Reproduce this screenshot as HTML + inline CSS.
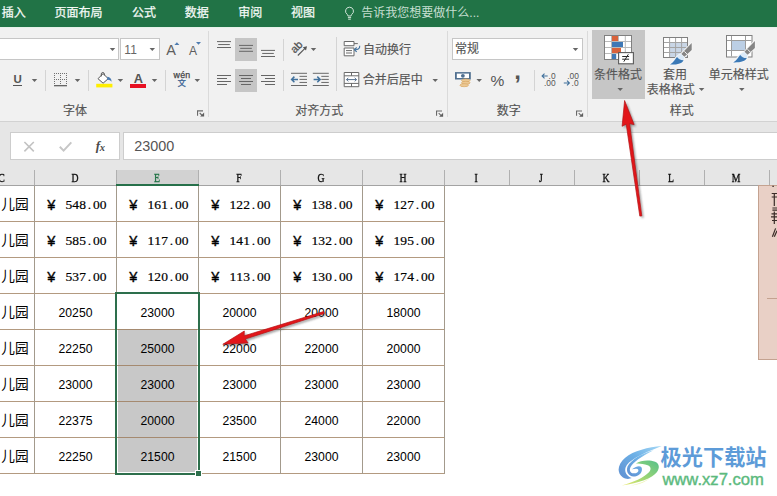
<!DOCTYPE html>
<html lang="zh-CN"><head><meta charset="utf-8"><title>Excel</title>
<style>
html,body{margin:0;padding:0;background:#fff;}
body{width:777px;height:496px;overflow:hidden;position:relative;font-family:"Liberation Sans",sans-serif;}
#root{position:absolute;left:0;top:0;width:777px;height:496px;overflow:hidden;background:#fff;}
.a{position:absolute;}
.t{position:absolute;overflow:visible;}
.x{position:absolute;white-space:pre;line-height:1;}
.sf{font-family:"Liberation Serif",serif;}
.mf{font-family:"Liberation Mono",monospace;}
.cj{font-family:"Liberation Sans","Noto Sans CJK SC",sans-serif;}
svg{display:block;}
</style></head><body><div id="root">
<div class="a" style="left:0px;top:0px;width:777px;height:27px;background:#217346;"></div>
<span class="x cj" style="left:1.8px;top:6.5px;font-size:12px;color:#f4faf6;-webkit-text-stroke:.25px;">插入</span>
<span class="x cj" style="left:54.6px;top:6.5px;font-size:12px;color:#f4faf6;-webkit-text-stroke:.25px;">页面布局</span>
<span class="x cj" style="left:132.1px;top:6.5px;font-size:12px;color:#f4faf6;-webkit-text-stroke:.25px;">公式</span>
<span class="x cj" style="left:184.8px;top:6.5px;font-size:12px;color:#f4faf6;-webkit-text-stroke:.25px;">数据</span>
<span class="x cj" style="left:238.2px;top:6.5px;font-size:12px;color:#f4faf6;-webkit-text-stroke:.25px;">审阅</span>
<span class="x cj" style="left:291px;top:6.5px;font-size:12px;color:#f4faf6;-webkit-text-stroke:.25px;">视图</span>
<span class="x cj" style="left:361.2px;top:6.5px;font-size:12px;color:#c6dfd1;">告诉我您想要做什么</span>
<span class="x " style="left:469.3px;top:7.2px;font-size:12px;color:#c6dfd1;">...</span>
<svg class="t" style="left:344px;top:6px;" width="11" height="15" viewBox="0 0 11 15"><path d="M5.5 1.2a3.9 3.9 0 0 0-2.3 7.1c.5.5.7 1 .7 1.7h3.2c0-.7.2-1.2.7-1.7A3.9 3.9 0 0 0 5.5 1.2z" fill="none" stroke="#cfe3d7" stroke-width="1"/><path d="M3.9 11.6h3.2M4.2 13.2h2.6" stroke="#cfe3d7" stroke-width="1"/></svg>
<div class="a" style="left:0px;top:27px;width:777px;height:94px;background:#f1f1f1;"></div>
<div class="a" style="left:0px;top:121px;width:777px;height:1px;background:#d2d2d2;"></div>
<div class="a" style="left:0px;top:27px;width:777px;height:1.2px;background:#e6f2ea;"></div>
<div class="a" style="left:0px;top:122px;width:777px;height:48px;background:#e6e6e6;"></div>
<div class="a" style="left:-2px;top:38px;width:121px;height:22px;background:#fff;border:1px solid #c6c6c6;box-sizing:border-box;"></div>
<svg class="t" style="left:109px;top:48px;" width="7" height="3" viewBox="-0.75 0 7 3"><path d="M0 0h5.5 l-2.75 3 z" fill="#666"/></svg>
<div class="a" style="left:120px;top:38px;width:40px;height:22px;background:#fff;border:1px solid #c6c6c6;box-sizing:border-box;"></div>
<span class="x " style="left:124.2px;top:43.8px;font-size:12px;color:#666;letter-spacing:.4px;">11</span>
<svg class="t" style="left:149px;top:48px;" width="7" height="3" viewBox="-0.55 0 7 3"><path d="M0 0h5.5 l-2.75 3 z" fill="#666"/></svg>
<span class="x " style="left:166.2px;top:42.6px;font-size:14.5px;color:#5e5e5e;">A</span>
<svg class="t" style="left:174px;top:42px;" width="6" height="3" viewBox="-0.4 -0.2 6 3"><path d="M0 2.800h5L2.500 0z" fill="#4f7cb0"/></svg>
<span class="x " style="left:189px;top:45px;font-size:12px;color:#5e5e5e;">A</span>
<svg class="t" style="left:196px;top:42px;" width="5" height="3" viewBox="0 0 5 3"><path d="M0 0h5L2.500 2.800z" fill="#4f7cb0"/></svg>
<span class="x " style="left:13.6px;top:74.3px;font-size:11.5px;color:#555;font-weight:bold;">U</span>
<div class="a" style="left:13px;top:85px;width:9px;height:1px;background:#555;"></div>
<svg class="t" style="left:31px;top:79px;" width="7" height="3" viewBox="-0.75 0 7 3"><path d="M0 0h5.5 l-2.75 3 z" fill="#666"/></svg>
<div class="a" style="left:44.8px;top:69.5px;width:1px;height:21px;background:#d4d4d4;"></div>
<svg class="t" style="left:54px;top:73px;" width="13" height="14" viewBox="0 0 13 14"><path d="M0 .5h13M0 6.500h13M.5 0v12M6.500 0v12M12.500 0v12" stroke="#707070" stroke-width="1" stroke-dasharray="1 1" fill="none"/><path d="M0 12.700h13" stroke="#555" stroke-width="1.200"/></svg>
<svg class="t" style="left:74px;top:79px;" width="7" height="3" viewBox="-0.75 0 7 3"><path d="M0 0h5.5 l-2.75 3 z" fill="#666"/></svg>
<div class="a" style="left:88px;top:69.5px;width:1px;height:21px;background:#d4d4d4;"></div>
<svg class="t" style="left:96px;top:71px;" width="17" height="18" viewBox="0 0 17 18"><rect x=".2" y="12.800" width="16.200" height="3.600" fill="#ffee00"/><path d="M7.100 2.600L12.200 7.700 7.100 12.200 2 7.700z" fill="#fff" stroke="#555" stroke-width="1" stroke-linejoin="round"/><path d="M5.300 5.400V2.800c0-1.700 3-1.700 3 0v1.600" fill="none" stroke="#555" stroke-width="1"/><path d="M11.300 5.800c2.700.4 4.300 2.200 4.300 5-1.100-1.600-2.600-2.300-4.500-2z" fill="#4a7ab0"/></svg>
<svg class="t" style="left:117px;top:79px;" width="7" height="3" viewBox="-0.65 0 7 3"><path d="M0 0h5.5 l-2.75 3 z" fill="#666"/></svg>
<span class="x " style="left:133.8px;top:73px;font-size:12.8px;color:#555;font-weight:bold;">A</span>
<div class="a" style="left:130.4px;top:84px;width:15.8px;height:4px;background:#e81123;"></div>
<svg class="t" style="left:151px;top:79px;" width="7" height="3" viewBox="-0.75 0 7 3"><path d="M0 0h5.5 l-2.75 3 z" fill="#666"/></svg>
<div class="a" style="left:165px;top:69.5px;width:1px;height:21px;background:#d4d4d4;"></div>
<span class="x " style="left:173.6px;top:71.3px;font-size:8.8px;color:#444;letter-spacing:.25px;-webkit-text-stroke:.25px;">wén</span>
<span class="x cj" style="left:177.4px;top:79.3px;font-size:8.5px;color:#4a6e9a;font-weight:bold;">文</span>
<svg class="t" style="left:194px;top:79px;" width="7" height="3" viewBox="-0.55 0 7 3"><path d="M0 0h5.500 l-2.750 3 z" fill="#666"/></svg>
<span class="x cj" style="left:63px;top:104.5px;font-size:12px;color:#555;-webkit-text-stroke:.15px;">字体</span>
<svg class="t" style="left:197px;top:110px;" width="8" height="8" viewBox="0 -0.3 8 8"><path d="M.55 5.400V.55H6" fill="none" stroke="#6a6a6a" stroke-width="1.100"/><path d="M2.700 2.700l2.500 2.500" fill="none" stroke="#6a6a6a" stroke-width="1.100"/><path d="M7.100 2.300V6.300H3.100z" fill="#5e5e5e"/></svg>
<div class="a" style="left:208px;top:31px;width:1px;height:86px;background:#dadada;"></div>
<div class="a" style="left:235.3px;top:38px;width:21.7px;height:23px;background:#c6c6c6;"></div>
<div class="a" style="left:235.3px;top:69px;width:21.7px;height:23px;background:#c6c6c6;"></div>
<svg class="t" style="left:217px;top:41px;" width="14" height="9" viewBox="0 -0.1 14 9"><path d="M0 0.5h14M1.2 3.45h11.6M0 6.4h14" stroke="#666" stroke-width="1" fill="none"/></svg>
<svg class="t" style="left:239px;top:44px;" width="14" height="10" viewBox="0 -0.9 14 10"><path d="M0 0.5h14M1.2 3.45h11.6M0 6.4h14" stroke="#666" stroke-width="1" fill="none"/></svg>
<svg class="t" style="left:261px;top:49px;" width="14" height="11" viewBox="0 -0.9 14 11"><path d="M0 0.5h14M1.2 3.55h11.6M0 6.6h14" stroke="#666" stroke-width="1" fill="none"/></svg>
<svg class="t" style="left:217px;top:75px;" width="14" height="12" viewBox="0 0 14 12"><path d="M0 0.5h14M0 3.5h10M0 6.5h14M0 9.5h10" stroke="#666" stroke-width="1" fill="none"/></svg>
<svg class="t" style="left:239px;top:75px;" width="14" height="12" viewBox="0 0 14 12"><path d="M0 0.5h14M2 3.5h10M0 6.5h14M2 9.5h10" stroke="#666" stroke-width="1" fill="none"/></svg>
<svg class="t" style="left:261px;top:75px;" width="14" height="12" viewBox="0 0 14 12"><path d="M0 0.5h14M4 3.5h10M0 6.5h14M4 9.5h10" stroke="#666" stroke-width="1" fill="none"/></svg>
<div class="a" style="left:283.4px;top:38.5px;width:1px;height:22px;background:#d4d4d4;"></div>
<div class="a" style="left:283.4px;top:69.5px;width:1px;height:21px;background:#d4d4d4;"></div>
<svg class="t" style="left:288px;top:38px;" width="22" height="22" viewBox="0 0 22 22"><text transform="translate(6.800 15.800) rotate(-45)" font-family="Liberation Sans, sans-serif" font-size="10.8" fill="#555" stroke="#555" stroke-width=".3">ab</text><path d="M9.800 17.500L18 9.300" stroke="#555" stroke-width="1.100" fill="none"/><path d="M19 8.300l-4.200 1 3.200 3.200z" fill="#555"/></svg>
<svg class="t" style="left:310px;top:48px;" width="7" height="3" viewBox="-0.75 0 7 3"><path d="M0 0h5.5 l-2.75 3 z" fill="#666"/></svg>
<svg class="t" style="left:291px;top:72px;" width="16" height="14" viewBox="0 -0.8 16 14"><path d="M0 .5h16M8.500 3.550H16M8.500 6.600H16M8.500 9.650H16M0 12.700h16" stroke="#6a6a6a" stroke-width="1" fill="none"/><path d="M.8 6.600h6.200M3.400 3.800l-2.800 2.800 2.800 2.800" stroke="#41719c" stroke-width="1.500" fill="none"/></svg>
<svg class="t" style="left:312px;top:72px;" width="17" height="14" viewBox="-0.8 -0.8 17 14"><path d="M0 .5h16M8.500 3.550H16M8.500 6.600H16M8.500 9.650H16M0 12.700h16" stroke="#6a6a6a" stroke-width="1" fill="none"/><path d="M.8 6.600h6.200M4.500 3.800l2.800 2.800-2.800 2.800" stroke="#41719c" stroke-width="1.500" fill="none"/></svg>
<div class="a" style="left:336px;top:37px;width:1px;height:54px;background:#d4d4d4;"></div>
<svg class="t" style="left:343px;top:41px;" width="19" height="16" viewBox="-0.7 0 19 16"><path d="M.5 .5h9.800v4.200H.5zM.5 7h9.800v7.800H.5z" fill="#fff" stroke="#6a6a6a" stroke-width="1"/><path d="M2.300 9.600h6M2.300 12h6M10.300 2.600h3.800" stroke="#6a6a6a" stroke-width="1" fill="none"/><path d="M16 4.800c.3 2.600-1.500 3.900-4.800 3.900" fill="none" stroke="#41719c" stroke-width="1.100"/><path d="M13 6.500l-2.300 2.200 2.300 2.200" fill="none" stroke="#41719c" stroke-width="1.100"/></svg>
<span class="x cj" style="left:363.1px;top:43.5px;font-size:12px;color:#555;-webkit-text-stroke:.15px;">自动换行</span>
<svg class="t" style="left:343px;top:72px;" width="17" height="16" viewBox="-0.7 0 17 16"><path d="M.5 .5h14.600v14.200H.5zM.5 3.800h14.600M.5 11.400h14.600M7.800 .5v3.300M7.800 11.400v3.300" fill="#fff" stroke="#6a6a6a" stroke-width="1"/><path d="M2.800 7.600h10M4.600 5.800l-1.800 1.800 1.800 1.800M11 5.800l1.800 1.800-1.800 1.800" fill="none" stroke="#56708e" stroke-width="1"/></svg>
<span class="x cj" style="left:362.7px;top:74.2px;font-size:12px;color:#555;-webkit-text-stroke:.15px;">合并后居中</span>
<svg class="t" style="left:432px;top:79px;" width="6" height="3" viewBox="-0.45 0 6 3"><path d="M0 0h5.5 l-2.75 3 z" fill="#666"/></svg>
<span class="x cj" style="left:295.3px;top:104.5px;font-size:12px;color:#555;-webkit-text-stroke:.15px;">对齐方式</span>
<svg class="t" style="left:436px;top:110px;" width="8" height="8" viewBox="0 -0.4 8 8"><path d="M.55 5.400V.55H6" fill="none" stroke="#6a6a6a" stroke-width="1.100"/><path d="M2.700 2.700l2.500 2.500" fill="none" stroke="#6a6a6a" stroke-width="1.100"/><path d="M7.100 2.300V6.300H3.100z" fill="#5e5e5e"/></svg>
<div class="a" style="left:447.4px;top:31px;width:1px;height:86px;background:#dadada;"></div>
<div class="a" style="left:452px;top:38px;width:131px;height:22px;background:#fff;border:1px solid #c6c6c6;box-sizing:border-box;"></div>
<span class="x cj" style="left:454.9px;top:43.3px;font-size:12px;color:#555;-webkit-text-stroke:.15px;">常规</span>
<svg class="t" style="left:572px;top:48px;" width="7" height="3" viewBox="-0.75 0 7 3"><path d="M0 0h5.5 l-2.75 3 z" fill="#666"/></svg>
<svg class="t" style="left:454px;top:71px;" width="18" height="18" viewBox="-0.8 -0.8 18 18"><rect x=".2" y=".3" width="15.800" height="7.400" fill="#4f6f8f"/><rect x="2" y="1.800" width="12.200" height="4.400" fill="#fff"/><circle cx="8.100" cy="4" r="1.900" fill="#4f6f8f"/><g fill="#ecc995" stroke="#d9a968" stroke-width=".7"><ellipse cx="11" cy="8.600" rx="4.300" ry="1.500"/><ellipse cx="11" cy="11" rx="4.300" ry="1.500"/><ellipse cx="9.400" cy="13.400" rx="4.300" ry="1.500"/></g></svg>
<svg class="t" style="left:476px;top:79px;" width="6" height="3" viewBox="-0.45 0 6 3"><path d="M0 0h5.5 l-2.75 3 z" fill="#666"/></svg>
<span class="x " style="left:490.5px;top:72.5px;font-size:15.5px;color:#555;">%</span>
<span class="x " style="left:514.2px;top:58.7px;font-size:24px;color:#555;font-weight:bold;">,</span>
<div class="a" style="left:534px;top:69.5px;width:1px;height:21px;background:#d4d4d4;"></div>
<svg class="t" style="left:541px;top:73px;" width="17" height="15" viewBox="-0.8 -0.2 17 15"><path d="M.3 2.800h5.600M2.700 .4L.3 2.800l2.400 2.400" stroke="#41719c" stroke-width="1.100" fill="none"/><text x="6.800" y="5.800" font-size="8.400" font-family="Liberation Sans" fill="#555">.0</text><text x="2.200" y="12.600" font-size="8.400" font-family="Liberation Sans" fill="#555">.00</text></svg>
<svg class="t" style="left:563px;top:73px;" width="17" height="15" viewBox="-0.8 -0.2 17 15"><text x="3.400" y="5.800" font-size="8.400" font-family="Liberation Sans" fill="#555">.00</text><path d="M0 9.800h5.600M3.200 7.400l2.400 2.400-2.400 2.400" stroke="#41719c" stroke-width="1.100" fill="none"/><text x="7.800" y="12.600" font-size="8.400" font-family="Liberation Sans" fill="#555">.0</text></svg>
<span class="x cj" style="left:496.7px;top:104.5px;font-size:12px;color:#555;-webkit-text-stroke:.15px;">数字</span>
<svg class="t" style="left:576px;top:110px;" width="8" height="8" viewBox="0 -0.4 8 8"><path d="M.55 5.400V.55H6" fill="none" stroke="#6a6a6a" stroke-width="1.100"/><path d="M2.700 2.700l2.500 2.500" fill="none" stroke="#6a6a6a" stroke-width="1.100"/><path d="M7.100 2.300V6.300H3.100z" fill="#5e5e5e"/></svg>
<div class="a" style="left:587.2px;top:31px;width:1px;height:86px;background:#dadada;"></div>
<div class="a" style="left:592.3px;top:29.5px;width:52.5px;height:69px;background:#c6c6c6;"></div>
<svg class="t" style="left:604px;top:34px;" width="31" height="31" viewBox="0 0 31 31"><rect x=".5" y="1.500" width="27" height="24" fill="#fff" stroke="#808080"/><path d="M1 7.500h26M1 13.500h26M1 19.500h26M7.500 2v23M14.500 2v23M21.300 2v23" stroke="#b9b9b9" stroke-width="1" fill="none"/><rect x="8" y="2" width="6" height="5" fill="#d9623b"/><rect x="8" y="8" width="11" height="5" fill="#3f78b5"/><rect x="8" y="14" width="9" height="5" fill="#d9623b"/><rect x="8" y="20" width="4.200" height="5" fill="#3f78b5"/><rect x="14.600" y="18.600" width="14.800" height="11.200" fill="#fff" stroke="#5a5a5a" stroke-width="1.100"/><path d="M18.200 22.500h6.900M18.200 25.200h6.900M24.300 20.300l-4.500 7.400" stroke="#2a2a2a" stroke-width="1" fill="none"/></svg>
<span class="x cj" style="left:593.9px;top:68.8px;font-size:12px;color:#555;-webkit-text-stroke:.15px;">条件格式</span>
<svg class="t" style="left:617px;top:88px;" width="6" height="3" viewBox="-0.45 0 6 3"><path d="M0 0h5.5 l-2.75 3 z" fill="#666"/></svg>
<svg class="t" style="left:663px;top:37px;" width="30" height="29" viewBox="0 0 30 29"><rect x=".5" y=".5" width="24" height="20" fill="#fff" stroke="#808080"/><rect x="6.500" y="5.500" width="17.500" height="14.500" fill="#c9d6e6"/><path d="M1 5.500h23M1 10.500h23M1 15.500h23M6.600 1v19M12.600 1v19M18.600 1v19" stroke="#a4a4a4" stroke-width="1" fill="none"/><g transform="translate(28.7 6)"><path d="M0 0V7.050L-7.300 13.800-10.400 10.900zM-10.700 11.100L-7.500 14.200C-7.300 18.700-12 21.700-21.700 21.600-17.500 19-16.500 13-10.700 11.100z" fill="#f6f6f6" stroke="#f6f6f6" stroke-width="1.800" stroke-linejoin="round"/><path d="M0 0V7.050L-7.300 13.800-10.400 10.900z" fill="#858585"/><path d="M-10.700 11.100L-7.500 14.200C-7.300 18.700-12 21.700-21.700 21.600-17.500 19-16.500 13-10.700 11.100z" fill="#dcebf9"/><path d="M-21.700 21.600C-17.900 19.300-16.600 16.200-14.700 14.100-13.300 16.200-11.200 17.300-8.100 17.200-9.500 20.300-14 21.800-21.700 21.600z" fill="#3b79b6"/><path d="M-7.300 8.400L-4.300 11.500" stroke="#f6f6f6" stroke-width="1" fill="none"/></g></svg>
<span class="x cj" style="left:663.1px;top:68.8px;font-size:12px;color:#555;-webkit-text-stroke:.15px;">套用</span>
<span class="x cj" style="left:646.7px;top:83.8px;font-size:12px;color:#555;-webkit-text-stroke:.15px;">表格格式</span>
<svg class="t" style="left:698px;top:88px;" width="7" height="3" viewBox="-0.85 0 7 3"><path d="M0 0h5.5 l-2.75 3 z" fill="#666"/></svg>
<svg class="t" style="left:726px;top:35px;" width="31" height="31" viewBox="0 0 31 31"><rect x=".5" y=".5" width="25.500" height="21.500" fill="#fff" stroke="#808080"/><rect x="5.500" y="5.500" width="14" height="10" fill="#bccfe5"/><path d="M1 5.500h24.500M1 15.500h24.500M5.500 1v20.500M19.500 1v20.500" stroke="#9c9c9c" stroke-width="1" fill="none"/><g transform="translate(28.9 5.9)"><path d="M0 0V7.050L-7.300 13.800-10.400 10.900zM-10.700 11.100L-7.500 14.200C-7.300 18.700-12 21.700-21.700 21.600-17.500 19-16.500 13-10.700 11.100z" fill="#f6f6f6" stroke="#f6f6f6" stroke-width="1.800" stroke-linejoin="round"/><path d="M0 0V7.050L-7.300 13.800-10.400 10.900z" fill="#858585"/><path d="M-10.700 11.100L-7.500 14.200C-7.300 18.700-12 21.700-21.700 21.600-17.500 19-16.500 13-10.700 11.100z" fill="#dcebf9"/><path d="M-21.700 21.600C-17.900 19.300-16.600 16.200-14.700 14.100-13.300 16.200-11.200 17.300-8.100 17.200-9.500 20.300-14 21.800-21.700 21.600z" fill="#3b79b6"/><path d="M-7.300 8.400L-4.300 11.500" stroke="#f6f6f6" stroke-width="1" fill="none"/></g></svg>
<span class="x cj" style="left:708.7px;top:68.8px;font-size:12px;color:#555;-webkit-text-stroke:.15px;">单元格样式</span>
<svg class="t" style="left:739px;top:88px;" width="6" height="3" viewBox="-0.05 0 6 3"><path d="M0 0h5.5 l-2.75 3 z" fill="#666"/></svg>
<span class="x cj" style="left:669.7px;top:104.5px;font-size:12px;color:#555;-webkit-text-stroke:.15px;">样式</span>
<div class="a" style="left:10px;top:132px;width:110px;height:28px;background:#fff;border:1px solid #cdcdcd;box-sizing:border-box;"></div>
<div class="a" style="left:123px;top:132px;width:660px;height:28px;background:#fff;border:1px solid #cdcdcd;box-sizing:border-box;"></div>
<svg class="t" style="left:23px;top:141px;" width="12" height="12" viewBox="-0.6 -0.2 12 12"><path d="M.8 .8l9.400 9.400M10.200 .8l-9.400 9.400" stroke="#c2c2c2" stroke-width="1.600"/></svg>
<svg class="t" style="left:58px;top:141px;" width="15" height="11" viewBox="-0.8 0 15 11"><path d="M1 5.800l3.800 3.800L12.500 1.400" fill="none" stroke="#c6c6c6" stroke-width="2"/></svg>
<span class="x sf" style="left:95.8px;top:139.2px;font-size:13px;color:#4a4a4a;font-weight:bold;"><i>f</i><span style="font-size:10.500px;position:relative;top:.5px;left:-.3px"><i>x</i></span></span>
<span class="x " style="left:134.2px;top:138.7px;font-size:14.4px;color:#555;">23000</span>
<div class="a" style="left:0px;top:160px;width:777px;height:25px;background:#e6e6e6;"></div>
<div class="a" style="left:116px;top:170px;width:82px;height:14px;background:#d2d2d2;"></div>
<div class="a" style="left:0px;top:185px;width:777px;height:1px;background:#a3a3a3;"></div>
<div class="a" style="left:34px;top:170px;width:1px;height:15px;background:#b0b0b0;"></div>
<div class="a" style="left:116px;top:170px;width:1px;height:15px;background:#b0b0b0;"></div>
<div class="a" style="left:198px;top:170px;width:1px;height:15px;background:#b0b0b0;"></div>
<div class="a" style="left:280px;top:170px;width:1px;height:15px;background:#b0b0b0;"></div>
<div class="a" style="left:362px;top:170px;width:1px;height:15px;background:#b0b0b0;"></div>
<div class="a" style="left:444px;top:170px;width:1px;height:15px;background:#b0b0b0;"></div>
<div class="a" style="left:509px;top:170px;width:1px;height:15px;background:#b0b0b0;"></div>
<div class="a" style="left:574px;top:170px;width:1px;height:15px;background:#b0b0b0;"></div>
<div class="a" style="left:639px;top:170px;width:1px;height:15px;background:#b0b0b0;"></div>
<div class="a" style="left:704px;top:170px;width:1px;height:15px;background:#b0b0b0;"></div>
<div class="a" style="left:769px;top:170px;width:1px;height:15px;background:#b0b0b0;"></div>
<div class="a" style="left:116px;top:184px;width:83px;height:2px;background:#26704a;"></div>
<span class="x sf" style="left:74.7px;top:171.3px;width:200px;margin-left:-100px;text-align:center;font-size:13.5px;color:#111;transform:scaleX(.72);-webkit-text-stroke:.4px;">D</span>
<span class="x sf" style="left:156.7px;top:171.3px;width:200px;margin-left:-100px;text-align:center;font-size:13.5px;color:#217346;transform:scaleX(.72);-webkit-text-stroke:.4px;">E</span>
<span class="x sf" style="left:238.7px;top:171.3px;width:200px;margin-left:-100px;text-align:center;font-size:13.5px;color:#111;transform:scaleX(.72);-webkit-text-stroke:.4px;">F</span>
<span class="x sf" style="left:320.7px;top:171.3px;width:200px;margin-left:-100px;text-align:center;font-size:13.5px;color:#111;transform:scaleX(.72);-webkit-text-stroke:.4px;">G</span>
<span class="x sf" style="left:402.7px;top:171.3px;width:200px;margin-left:-100px;text-align:center;font-size:13.5px;color:#111;transform:scaleX(.72);-webkit-text-stroke:.4px;">H</span>
<span class="x sf" style="left:476.2px;top:171.3px;width:200px;margin-left:-100px;text-align:center;font-size:13.5px;color:#111;transform:scaleX(.72);-webkit-text-stroke:.4px;">I</span>
<span class="x sf" style="left:541.2px;top:171.3px;width:200px;margin-left:-100px;text-align:center;font-size:13.5px;color:#111;transform:scaleX(.72);-webkit-text-stroke:.4px;">J</span>
<span class="x sf" style="left:606.2px;top:171.3px;width:200px;margin-left:-100px;text-align:center;font-size:13.5px;color:#111;transform:scaleX(.72);-webkit-text-stroke:.4px;">K</span>
<span class="x sf" style="left:671.2px;top:171.3px;width:200px;margin-left:-100px;text-align:center;font-size:13.5px;color:#111;transform:scaleX(.72);-webkit-text-stroke:.4px;">L</span>
<span class="x sf" style="left:736.2px;top:171.3px;width:200px;margin-left:-100px;text-align:center;font-size:13.5px;color:#111;transform:scaleX(.72);-webkit-text-stroke:.4px;">M</span>
<span class="x sf" style="left:-2.8px;top:171.3px;font-size:13.5px;color:#111;transform:scaleX(.72);-webkit-text-stroke:.4px;">C</span>
<div class="a" style="left:0px;top:221px;width:445px;height:1px;background:#b39a80;"></div>
<div class="a" style="left:0px;top:257px;width:445px;height:1px;background:#b39a80;"></div>
<div class="a" style="left:0px;top:293px;width:445px;height:1px;background:#b39a80;"></div>
<div class="a" style="left:0px;top:329px;width:445px;height:1px;background:#b39a80;"></div>
<div class="a" style="left:0px;top:365px;width:445px;height:1px;background:#b39a80;"></div>
<div class="a" style="left:0px;top:401px;width:445px;height:1px;background:#b39a80;"></div>
<div class="a" style="left:0px;top:437px;width:445px;height:1px;background:#b39a80;"></div>
<div class="a" style="left:0px;top:473px;width:445px;height:1px;background:#b39a80;"></div>
<div class="a" style="left:34px;top:186px;width:1px;height:288px;background:#a39a8c;"></div>
<div class="a" style="left:116px;top:186px;width:1px;height:288px;background:#a39a8c;"></div>
<div class="a" style="left:198px;top:186px;width:1px;height:288px;background:#a39a8c;"></div>
<div class="a" style="left:280px;top:186px;width:1px;height:288px;background:#a39a8c;"></div>
<div class="a" style="left:362px;top:186px;width:1px;height:288px;background:#a39a8c;"></div>
<div class="a" style="left:444px;top:186px;width:1px;height:288px;background:#a39a8c;"></div>
<div class="a" style="left:118px;top:329px;width:79px;height:143px;background:#c8c8c8;"></div>
<div class="a" style="left:118px;top:329px;width:79px;height:1px;background:#a58a70;"></div>
<div class="a" style="left:118px;top:365px;width:79px;height:1px;background:#a58a70;"></div>
<div class="a" style="left:118px;top:401px;width:79px;height:1px;background:#a58a70;"></div>
<div class="a" style="left:118px;top:437px;width:79px;height:1px;background:#a58a70;"></div>
<div class="a" style="left:115px;top:292px;width:85px;height:183px;background:transparent;border:2px solid #2d6f4c;box-sizing:border-box;"></div>
<div class="a" style="left:195px;top:470px;width:7px;height:7px;background:#fff;"></div>
<div class="a" style="left:196px;top:471px;width:5px;height:5px;background:#2d6f4c;"></div>
<span class="x cj" style="left:1.2px;top:197.5px;font-size:13.7px;color:#000;">儿园</span>
<span class="x sf" style="left:65.32px;top:198.2px;font-size:13.5px;color:#000;-webkit-text-stroke:.2px;"><i style="display:inline-block;width:6.88px;text-align:center;font-style:normal">5</i><i style="display:inline-block;width:6.88px;text-align:center;font-style:normal">4</i><i style="display:inline-block;width:6.88px;text-align:center;font-style:normal">8</i><i style="display:inline-block;width:6.88px;text-align:center;font-style:normal">.</i><i style="display:inline-block;width:6.88px;text-align:center;font-style:normal">0</i><i style="display:inline-block;width:6.88px;text-align:center;font-style:normal">0</i></span>
<span class="x " style="left:46.8px;top:197.9px;font-size:14.5px;color:#000;width:9px;text-align:center;display:inline-block;-webkit-text-stroke:.35px;">¥</span>
<span class="x sf" style="left:147.32px;top:198.2px;font-size:13.5px;color:#000;-webkit-text-stroke:.2px;"><i style="display:inline-block;width:6.88px;text-align:center;font-style:normal">1</i><i style="display:inline-block;width:6.88px;text-align:center;font-style:normal">6</i><i style="display:inline-block;width:6.88px;text-align:center;font-style:normal">1</i><i style="display:inline-block;width:6.88px;text-align:center;font-style:normal">.</i><i style="display:inline-block;width:6.88px;text-align:center;font-style:normal">0</i><i style="display:inline-block;width:6.88px;text-align:center;font-style:normal">0</i></span>
<span class="x " style="left:128.8px;top:197.9px;font-size:14.5px;color:#000;width:9px;text-align:center;display:inline-block;-webkit-text-stroke:.35px;">¥</span>
<span class="x sf" style="left:229.32px;top:198.2px;font-size:13.5px;color:#000;-webkit-text-stroke:.2px;"><i style="display:inline-block;width:6.88px;text-align:center;font-style:normal">1</i><i style="display:inline-block;width:6.88px;text-align:center;font-style:normal">2</i><i style="display:inline-block;width:6.88px;text-align:center;font-style:normal">2</i><i style="display:inline-block;width:6.88px;text-align:center;font-style:normal">.</i><i style="display:inline-block;width:6.88px;text-align:center;font-style:normal">0</i><i style="display:inline-block;width:6.88px;text-align:center;font-style:normal">0</i></span>
<span class="x " style="left:210.8px;top:197.9px;font-size:14.5px;color:#000;width:9px;text-align:center;display:inline-block;-webkit-text-stroke:.35px;">¥</span>
<span class="x sf" style="left:311.32px;top:198.2px;font-size:13.5px;color:#000;-webkit-text-stroke:.2px;"><i style="display:inline-block;width:6.88px;text-align:center;font-style:normal">1</i><i style="display:inline-block;width:6.88px;text-align:center;font-style:normal">3</i><i style="display:inline-block;width:6.88px;text-align:center;font-style:normal">8</i><i style="display:inline-block;width:6.88px;text-align:center;font-style:normal">.</i><i style="display:inline-block;width:6.88px;text-align:center;font-style:normal">0</i><i style="display:inline-block;width:6.88px;text-align:center;font-style:normal">0</i></span>
<span class="x " style="left:292.8px;top:197.9px;font-size:14.5px;color:#000;width:9px;text-align:center;display:inline-block;-webkit-text-stroke:.35px;">¥</span>
<span class="x sf" style="left:393.32px;top:198.2px;font-size:13.5px;color:#000;-webkit-text-stroke:.2px;"><i style="display:inline-block;width:6.88px;text-align:center;font-style:normal">1</i><i style="display:inline-block;width:6.88px;text-align:center;font-style:normal">2</i><i style="display:inline-block;width:6.88px;text-align:center;font-style:normal">7</i><i style="display:inline-block;width:6.88px;text-align:center;font-style:normal">.</i><i style="display:inline-block;width:6.88px;text-align:center;font-style:normal">0</i><i style="display:inline-block;width:6.88px;text-align:center;font-style:normal">0</i></span>
<span class="x " style="left:374.8px;top:197.9px;font-size:14.5px;color:#000;width:9px;text-align:center;display:inline-block;-webkit-text-stroke:.35px;">¥</span>
<span class="x cj" style="left:1.2px;top:233.5px;font-size:13.7px;color:#000;">儿园</span>
<span class="x sf" style="left:65.32px;top:234.2px;font-size:13.5px;color:#000;-webkit-text-stroke:.2px;"><i style="display:inline-block;width:6.88px;text-align:center;font-style:normal">5</i><i style="display:inline-block;width:6.88px;text-align:center;font-style:normal">8</i><i style="display:inline-block;width:6.88px;text-align:center;font-style:normal">5</i><i style="display:inline-block;width:6.88px;text-align:center;font-style:normal">.</i><i style="display:inline-block;width:6.88px;text-align:center;font-style:normal">0</i><i style="display:inline-block;width:6.88px;text-align:center;font-style:normal">0</i></span>
<span class="x " style="left:46.8px;top:233.9px;font-size:14.5px;color:#000;width:9px;text-align:center;display:inline-block;-webkit-text-stroke:.35px;">¥</span>
<span class="x sf" style="left:147.32px;top:234.2px;font-size:13.5px;color:#000;-webkit-text-stroke:.2px;"><i style="display:inline-block;width:6.88px;text-align:center;font-style:normal">1</i><i style="display:inline-block;width:6.88px;text-align:center;font-style:normal">1</i><i style="display:inline-block;width:6.88px;text-align:center;font-style:normal">7</i><i style="display:inline-block;width:6.88px;text-align:center;font-style:normal">.</i><i style="display:inline-block;width:6.88px;text-align:center;font-style:normal">0</i><i style="display:inline-block;width:6.88px;text-align:center;font-style:normal">0</i></span>
<span class="x " style="left:128.8px;top:233.9px;font-size:14.5px;color:#000;width:9px;text-align:center;display:inline-block;-webkit-text-stroke:.35px;">¥</span>
<span class="x sf" style="left:229.32px;top:234.2px;font-size:13.5px;color:#000;-webkit-text-stroke:.2px;"><i style="display:inline-block;width:6.88px;text-align:center;font-style:normal">1</i><i style="display:inline-block;width:6.88px;text-align:center;font-style:normal">4</i><i style="display:inline-block;width:6.88px;text-align:center;font-style:normal">1</i><i style="display:inline-block;width:6.88px;text-align:center;font-style:normal">.</i><i style="display:inline-block;width:6.88px;text-align:center;font-style:normal">0</i><i style="display:inline-block;width:6.88px;text-align:center;font-style:normal">0</i></span>
<span class="x " style="left:210.8px;top:233.9px;font-size:14.5px;color:#000;width:9px;text-align:center;display:inline-block;-webkit-text-stroke:.35px;">¥</span>
<span class="x sf" style="left:311.32px;top:234.2px;font-size:13.5px;color:#000;-webkit-text-stroke:.2px;"><i style="display:inline-block;width:6.88px;text-align:center;font-style:normal">1</i><i style="display:inline-block;width:6.88px;text-align:center;font-style:normal">3</i><i style="display:inline-block;width:6.88px;text-align:center;font-style:normal">2</i><i style="display:inline-block;width:6.88px;text-align:center;font-style:normal">.</i><i style="display:inline-block;width:6.88px;text-align:center;font-style:normal">0</i><i style="display:inline-block;width:6.88px;text-align:center;font-style:normal">0</i></span>
<span class="x " style="left:292.8px;top:233.9px;font-size:14.5px;color:#000;width:9px;text-align:center;display:inline-block;-webkit-text-stroke:.35px;">¥</span>
<span class="x sf" style="left:393.32px;top:234.2px;font-size:13.5px;color:#000;-webkit-text-stroke:.2px;"><i style="display:inline-block;width:6.88px;text-align:center;font-style:normal">1</i><i style="display:inline-block;width:6.88px;text-align:center;font-style:normal">9</i><i style="display:inline-block;width:6.88px;text-align:center;font-style:normal">5</i><i style="display:inline-block;width:6.88px;text-align:center;font-style:normal">.</i><i style="display:inline-block;width:6.88px;text-align:center;font-style:normal">0</i><i style="display:inline-block;width:6.88px;text-align:center;font-style:normal">0</i></span>
<span class="x " style="left:374.8px;top:233.9px;font-size:14.5px;color:#000;width:9px;text-align:center;display:inline-block;-webkit-text-stroke:.35px;">¥</span>
<span class="x cj" style="left:1.2px;top:269.5px;font-size:13.7px;color:#000;">儿园</span>
<span class="x sf" style="left:65.32px;top:270.2px;font-size:13.5px;color:#000;-webkit-text-stroke:.2px;"><i style="display:inline-block;width:6.88px;text-align:center;font-style:normal">5</i><i style="display:inline-block;width:6.88px;text-align:center;font-style:normal">3</i><i style="display:inline-block;width:6.88px;text-align:center;font-style:normal">7</i><i style="display:inline-block;width:6.88px;text-align:center;font-style:normal">.</i><i style="display:inline-block;width:6.88px;text-align:center;font-style:normal">0</i><i style="display:inline-block;width:6.88px;text-align:center;font-style:normal">0</i></span>
<span class="x " style="left:46.8px;top:269.9px;font-size:14.5px;color:#000;width:9px;text-align:center;display:inline-block;-webkit-text-stroke:.35px;">¥</span>
<span class="x sf" style="left:147.32px;top:270.2px;font-size:13.5px;color:#000;-webkit-text-stroke:.2px;"><i style="display:inline-block;width:6.88px;text-align:center;font-style:normal">1</i><i style="display:inline-block;width:6.88px;text-align:center;font-style:normal">2</i><i style="display:inline-block;width:6.88px;text-align:center;font-style:normal">0</i><i style="display:inline-block;width:6.88px;text-align:center;font-style:normal">.</i><i style="display:inline-block;width:6.88px;text-align:center;font-style:normal">0</i><i style="display:inline-block;width:6.88px;text-align:center;font-style:normal">0</i></span>
<span class="x " style="left:128.8px;top:269.9px;font-size:14.5px;color:#000;width:9px;text-align:center;display:inline-block;-webkit-text-stroke:.35px;">¥</span>
<span class="x sf" style="left:229.32px;top:270.2px;font-size:13.5px;color:#000;-webkit-text-stroke:.2px;"><i style="display:inline-block;width:6.88px;text-align:center;font-style:normal">1</i><i style="display:inline-block;width:6.88px;text-align:center;font-style:normal">1</i><i style="display:inline-block;width:6.88px;text-align:center;font-style:normal">3</i><i style="display:inline-block;width:6.88px;text-align:center;font-style:normal">.</i><i style="display:inline-block;width:6.88px;text-align:center;font-style:normal">0</i><i style="display:inline-block;width:6.88px;text-align:center;font-style:normal">0</i></span>
<span class="x " style="left:210.8px;top:269.9px;font-size:14.5px;color:#000;width:9px;text-align:center;display:inline-block;-webkit-text-stroke:.35px;">¥</span>
<span class="x sf" style="left:311.32px;top:270.2px;font-size:13.5px;color:#000;-webkit-text-stroke:.2px;"><i style="display:inline-block;width:6.88px;text-align:center;font-style:normal">1</i><i style="display:inline-block;width:6.88px;text-align:center;font-style:normal">3</i><i style="display:inline-block;width:6.88px;text-align:center;font-style:normal">0</i><i style="display:inline-block;width:6.88px;text-align:center;font-style:normal">.</i><i style="display:inline-block;width:6.88px;text-align:center;font-style:normal">0</i><i style="display:inline-block;width:6.88px;text-align:center;font-style:normal">0</i></span>
<span class="x " style="left:292.8px;top:269.9px;font-size:14.5px;color:#000;width:9px;text-align:center;display:inline-block;-webkit-text-stroke:.35px;">¥</span>
<span class="x sf" style="left:393.32px;top:270.2px;font-size:13.5px;color:#000;-webkit-text-stroke:.2px;"><i style="display:inline-block;width:6.88px;text-align:center;font-style:normal">1</i><i style="display:inline-block;width:6.88px;text-align:center;font-style:normal">7</i><i style="display:inline-block;width:6.88px;text-align:center;font-style:normal">4</i><i style="display:inline-block;width:6.88px;text-align:center;font-style:normal">.</i><i style="display:inline-block;width:6.88px;text-align:center;font-style:normal">0</i><i style="display:inline-block;width:6.88px;text-align:center;font-style:normal">0</i></span>
<span class="x " style="left:374.8px;top:269.9px;font-size:14.5px;color:#000;width:9px;text-align:center;display:inline-block;-webkit-text-stroke:.35px;">¥</span>
<span class="x cj" style="left:1.2px;top:305.5px;font-size:13.7px;color:#000;">儿园</span>
<span class="x " style="left:75.5px;top:307.2px;width:200px;margin-left:-100px;text-align:center;font-size:12.2px;color:#000;">20250</span>
<span class="x " style="left:157.5px;top:307.2px;width:200px;margin-left:-100px;text-align:center;font-size:12.2px;color:#000;">23000</span>
<span class="x " style="left:239.5px;top:307.2px;width:200px;margin-left:-100px;text-align:center;font-size:12.2px;color:#000;">20000</span>
<span class="x " style="left:321.5px;top:307.2px;width:200px;margin-left:-100px;text-align:center;font-size:12.2px;color:#000;">20000</span>
<span class="x " style="left:403.5px;top:307.2px;width:200px;margin-left:-100px;text-align:center;font-size:12.2px;color:#000;">18000</span>
<span class="x cj" style="left:1.2px;top:341.5px;font-size:13.7px;color:#000;">儿园</span>
<span class="x " style="left:75.5px;top:343.2px;width:200px;margin-left:-100px;text-align:center;font-size:12.2px;color:#000;">22250</span>
<span class="x " style="left:157.5px;top:343.2px;width:200px;margin-left:-100px;text-align:center;font-size:12.2px;color:#000;">25000</span>
<span class="x " style="left:239.5px;top:343.2px;width:200px;margin-left:-100px;text-align:center;font-size:12.2px;color:#000;">22000</span>
<span class="x " style="left:321.5px;top:343.2px;width:200px;margin-left:-100px;text-align:center;font-size:12.2px;color:#000;">22000</span>
<span class="x " style="left:403.5px;top:343.2px;width:200px;margin-left:-100px;text-align:center;font-size:12.2px;color:#000;">20000</span>
<span class="x cj" style="left:1.2px;top:377.5px;font-size:13.7px;color:#000;">儿园</span>
<span class="x " style="left:75.5px;top:379.2px;width:200px;margin-left:-100px;text-align:center;font-size:12.2px;color:#000;">23000</span>
<span class="x " style="left:157.5px;top:379.2px;width:200px;margin-left:-100px;text-align:center;font-size:12.2px;color:#000;">23000</span>
<span class="x " style="left:239.5px;top:379.2px;width:200px;margin-left:-100px;text-align:center;font-size:12.2px;color:#000;">23000</span>
<span class="x " style="left:321.5px;top:379.2px;width:200px;margin-left:-100px;text-align:center;font-size:12.2px;color:#000;">23000</span>
<span class="x " style="left:403.5px;top:379.2px;width:200px;margin-left:-100px;text-align:center;font-size:12.2px;color:#000;">23000</span>
<span class="x cj" style="left:1.2px;top:413.5px;font-size:13.7px;color:#000;">儿园</span>
<span class="x " style="left:75.5px;top:415.2px;width:200px;margin-left:-100px;text-align:center;font-size:12.2px;color:#000;">22375</span>
<span class="x " style="left:157.5px;top:415.2px;width:200px;margin-left:-100px;text-align:center;font-size:12.2px;color:#000;">20000</span>
<span class="x " style="left:239.5px;top:415.2px;width:200px;margin-left:-100px;text-align:center;font-size:12.2px;color:#000;">23500</span>
<span class="x " style="left:321.5px;top:415.2px;width:200px;margin-left:-100px;text-align:center;font-size:12.2px;color:#000;">24000</span>
<span class="x " style="left:403.5px;top:415.2px;width:200px;margin-left:-100px;text-align:center;font-size:12.2px;color:#000;">22000</span>
<span class="x cj" style="left:1.2px;top:449.5px;font-size:13.7px;color:#000;">儿园</span>
<span class="x " style="left:75.5px;top:451.2px;width:200px;margin-left:-100px;text-align:center;font-size:12.2px;color:#000;">22250</span>
<span class="x " style="left:157.5px;top:451.2px;width:200px;margin-left:-100px;text-align:center;font-size:12.2px;color:#000;">21500</span>
<span class="x " style="left:239.5px;top:451.2px;width:200px;margin-left:-100px;text-align:center;font-size:12.2px;color:#000;">21500</span>
<span class="x " style="left:321.5px;top:451.2px;width:200px;margin-left:-100px;text-align:center;font-size:12.2px;color:#000;">23000</span>
<span class="x " style="left:403.5px;top:451.2px;width:200px;margin-left:-100px;text-align:center;font-size:12.2px;color:#000;">23000</span>
<div class="a" style="left:758px;top:185px;width:30px;height:175px;background:#e9d0c6;border:1px solid #c4a290;box-sizing:border-box;"></div>
<div class="a" style="left:767px;top:298px;width:12px;height:1px;background:#c4a290;"></div>
<svg class="t" style="left:769px;top:186px;" width="8" height="54" viewBox="0 0 8 54"><path d="M3.400 .4h1.400M2.700 7.500h5.300M2.700 11h5.300M5.300 6.900v13M3.400 22h4.600M3.400 24.200h4.600M5.300 25.600v12.300M2.500 27.800h5.500M2 30.800h6M3 34.500h5M3.400 50.800l3.200-8.400M5.300 50.800l2.700-6" stroke="#3b2c28" stroke-width="1.200" fill="none"/></svg>
<svg class="t" style="left:0;top:0" width="777" height="496" viewBox="0 0 777 496"><defs><filter id="sh" x="-20%" y="-20%" width="140%" height="140%"><feGaussianBlur stdDeviation="1.200"/></filter><linearGradient id="rg" x1="0" y1="0" x2="1" y2="0"><stop offset="0" stop-color="#b80f12"/><stop offset=".5" stop-color="#e21b1f"/><stop offset="1" stop-color="#b80f12"/></linearGradient></defs><g transform="translate(1.800 1.800)" opacity=".45" filter="url(#sh)"><path d="M641.8 215.9L629.6 123.7L634.1 124.6L624.6 100.5L622.1 126.3L626.2 124.2L639.8 216.1z" fill="#222"/><path d="M323.7 311.5L244.2 335.8L244.3 331.0L222.8 344.3L248.0 342.9L245.3 339.0L324.3 313.5z" fill="#222"/></g><path d="M641.8 215.9L629.6 123.7L634.1 124.6L624.6 100.5L622.1 126.3L626.2 124.2L639.8 216.1z" fill="#e2161a" stroke="#b41216" stroke-width=".7" stroke-linejoin="round"/><path d="M323.7 311.5L244.2 335.8L244.3 331.0L222.8 344.3L248.0 342.9L245.3 339.0L324.3 313.5z" fill="#e2161a" stroke="#b41216" stroke-width=".7" stroke-linejoin="round"/></svg>
<svg class="t" style="left:610px;top:438px" width="60" height="58" viewBox="0 0 513 496"><defs><linearGradient id="wb" x1="0" y1="1" x2="1" y2="0"><stop offset="0" stop-color="#5f90d2"/><stop offset=".55" stop-color="#6db0e6"/><stop offset="1" stop-color="#a5d8f6"/></linearGradient><linearGradient id="wg" x1="0" y1="1" x2="1" y2="0"><stop offset="0" stop-color="#f0ea74"/><stop offset=".4" stop-color="#a6d872"/><stop offset="1" stop-color="#55c08a"/></linearGradient><filter id="wf" x="-5%%" y="-5%%" width="110%%" height="110%%"><feGaussianBlur stdDeviation="2.500"/></filter></defs><g filter="url(#wf)"><path d="M442 68C330 78 200 108 130 168C68 222 52 292 108 336C134 354 166 352 186 343C144 326 120 292 134 250C152 198 252 142 442 68Z" fill="url(#wb)"/><path d="M372 104C270 132 178 186 150 244C134 290 160 326 200 329C242 329 277 300 273 262C268 236 234 234 188 268C214 261 240 261 243 275C245 292 222 305 200 302C172 298 162 275 176 247C196 206 272 156 372 104Z" fill="url(#wb)"/><path d="M222 219C258 194 330 184 386 204C422 220 427 256 402 291C360 346 250 386 100 406C200 376 290 340 335 290C360 260 345 233 300 226C270 221 246 223 222 219Z" fill="url(#wg)"/><path d="M175 408C240 395 300 372 340 345C300 380 240 402 175 408Z" fill="#e6ec8a" opacity=".7"/></g></svg>
<span class="x cj" style="left:660.6px;top:446.5px;font-size:21.2px;color:#5d9bd8;font-weight:bold;">极光下载站</span>
<span class="x " style="left:662.4px;top:471.8px;font-size:16.6px;color:#5cba7e;-webkit-text-stroke:.4px;">www.xz7.com</span>
</div></body></html>
